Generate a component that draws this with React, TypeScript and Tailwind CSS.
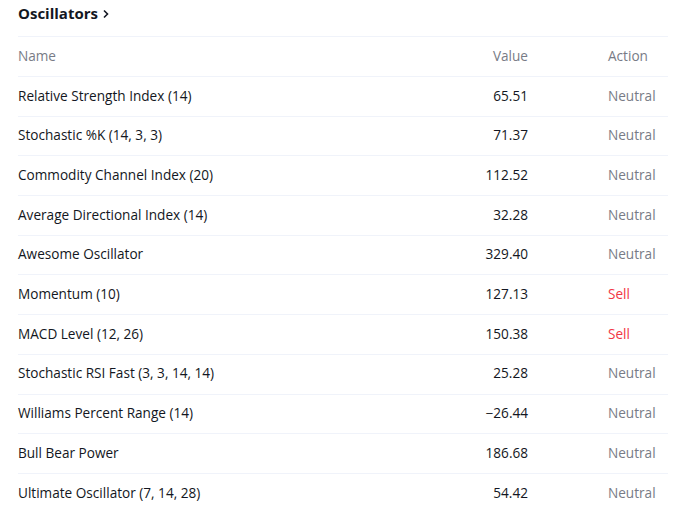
const rows: { name: string; value: string; action: "Neutral" | "Sell" }[] = [
  { name: "Relative Strength Index (14)", value: "65.51", action: "Neutral" },
  { name: "Stochastic %K (14, 3, 3)", value: "71.37", action: "Neutral" },
  { name: "Commodity Channel Index (20)", value: "112.52", action: "Neutral" },
  { name: "Average Directional Index (14)", value: "32.28", action: "Neutral" },
  { name: "Awesome Oscillator", value: "329.40", action: "Neutral" },
  { name: "Momentum (10)", value: "127.13", action: "Sell" },
  { name: "MACD Level (12, 26)", value: "150.38", action: "Sell" },
  { name: "Stochastic RSI Fast (3, 3, 14, 14)", value: "25.28", action: "Neutral" },
  { name: "Williams Percent Range (14)", value: "\u221226.44", action: "Neutral" },
  { name: "Bull Bear Power", value: "186.68", action: "Neutral" },
  { name: "Ultimate Oscillator (7, 14, 28)", value: "54.42", action: "Neutral" },
];

export default function App() {
  return (
    <div
      className="w-[673px] h-[505px] overflow-hidden bg-white pl-[18px] pr-[5px] text-[13.6px] text-[#131722]"
      style={{ fontFamily: '"Open Sans", "Noto Sans", sans-serif' }}
    >
      <div className="flex h-[36px] items-center pb-[10px]">
        <span className="text-[15px] font-bold leading-none">Oscillators</span>
        <svg width="10" height="10" viewBox="0 0 10 10" className="ml-[3px] mt-[2px]">
          <path d="M3 1.5 6.5 5 3 8.5" fill="none" stroke="#131722" strokeWidth="1.6" />
        </svg>
      </div>
      <div className="w-[650px]">
        <div className="flex h-[40px] items-center border-t border-[#f0f3fa] pb-[1px] text-[#787b86]">
          <div className="flex-1">Name</div>
          <div className="w-[120px] text-right">Value</div>
          <div className="w-[140px] pl-[80px]">Action</div>
        </div>
        {rows.map((r) => (
          <div
            key={r.name}
            className="flex h-[39.7px] items-center border-t border-[#f0f3fa] pb-[1px]"
          >
            <div className="flex-1">{r.name}</div>
            <div className="w-[120px] text-right">{r.value}</div>
            <div
              className={
                r.action === "Sell"
                  ? "w-[140px] pl-[80px] text-[#f23645]"
                  : "w-[140px] pl-[80px] text-[#787b86]"
              }
            >
              {r.action}
            </div>
          </div>
        ))}
      </div>
    </div>
  );
}
